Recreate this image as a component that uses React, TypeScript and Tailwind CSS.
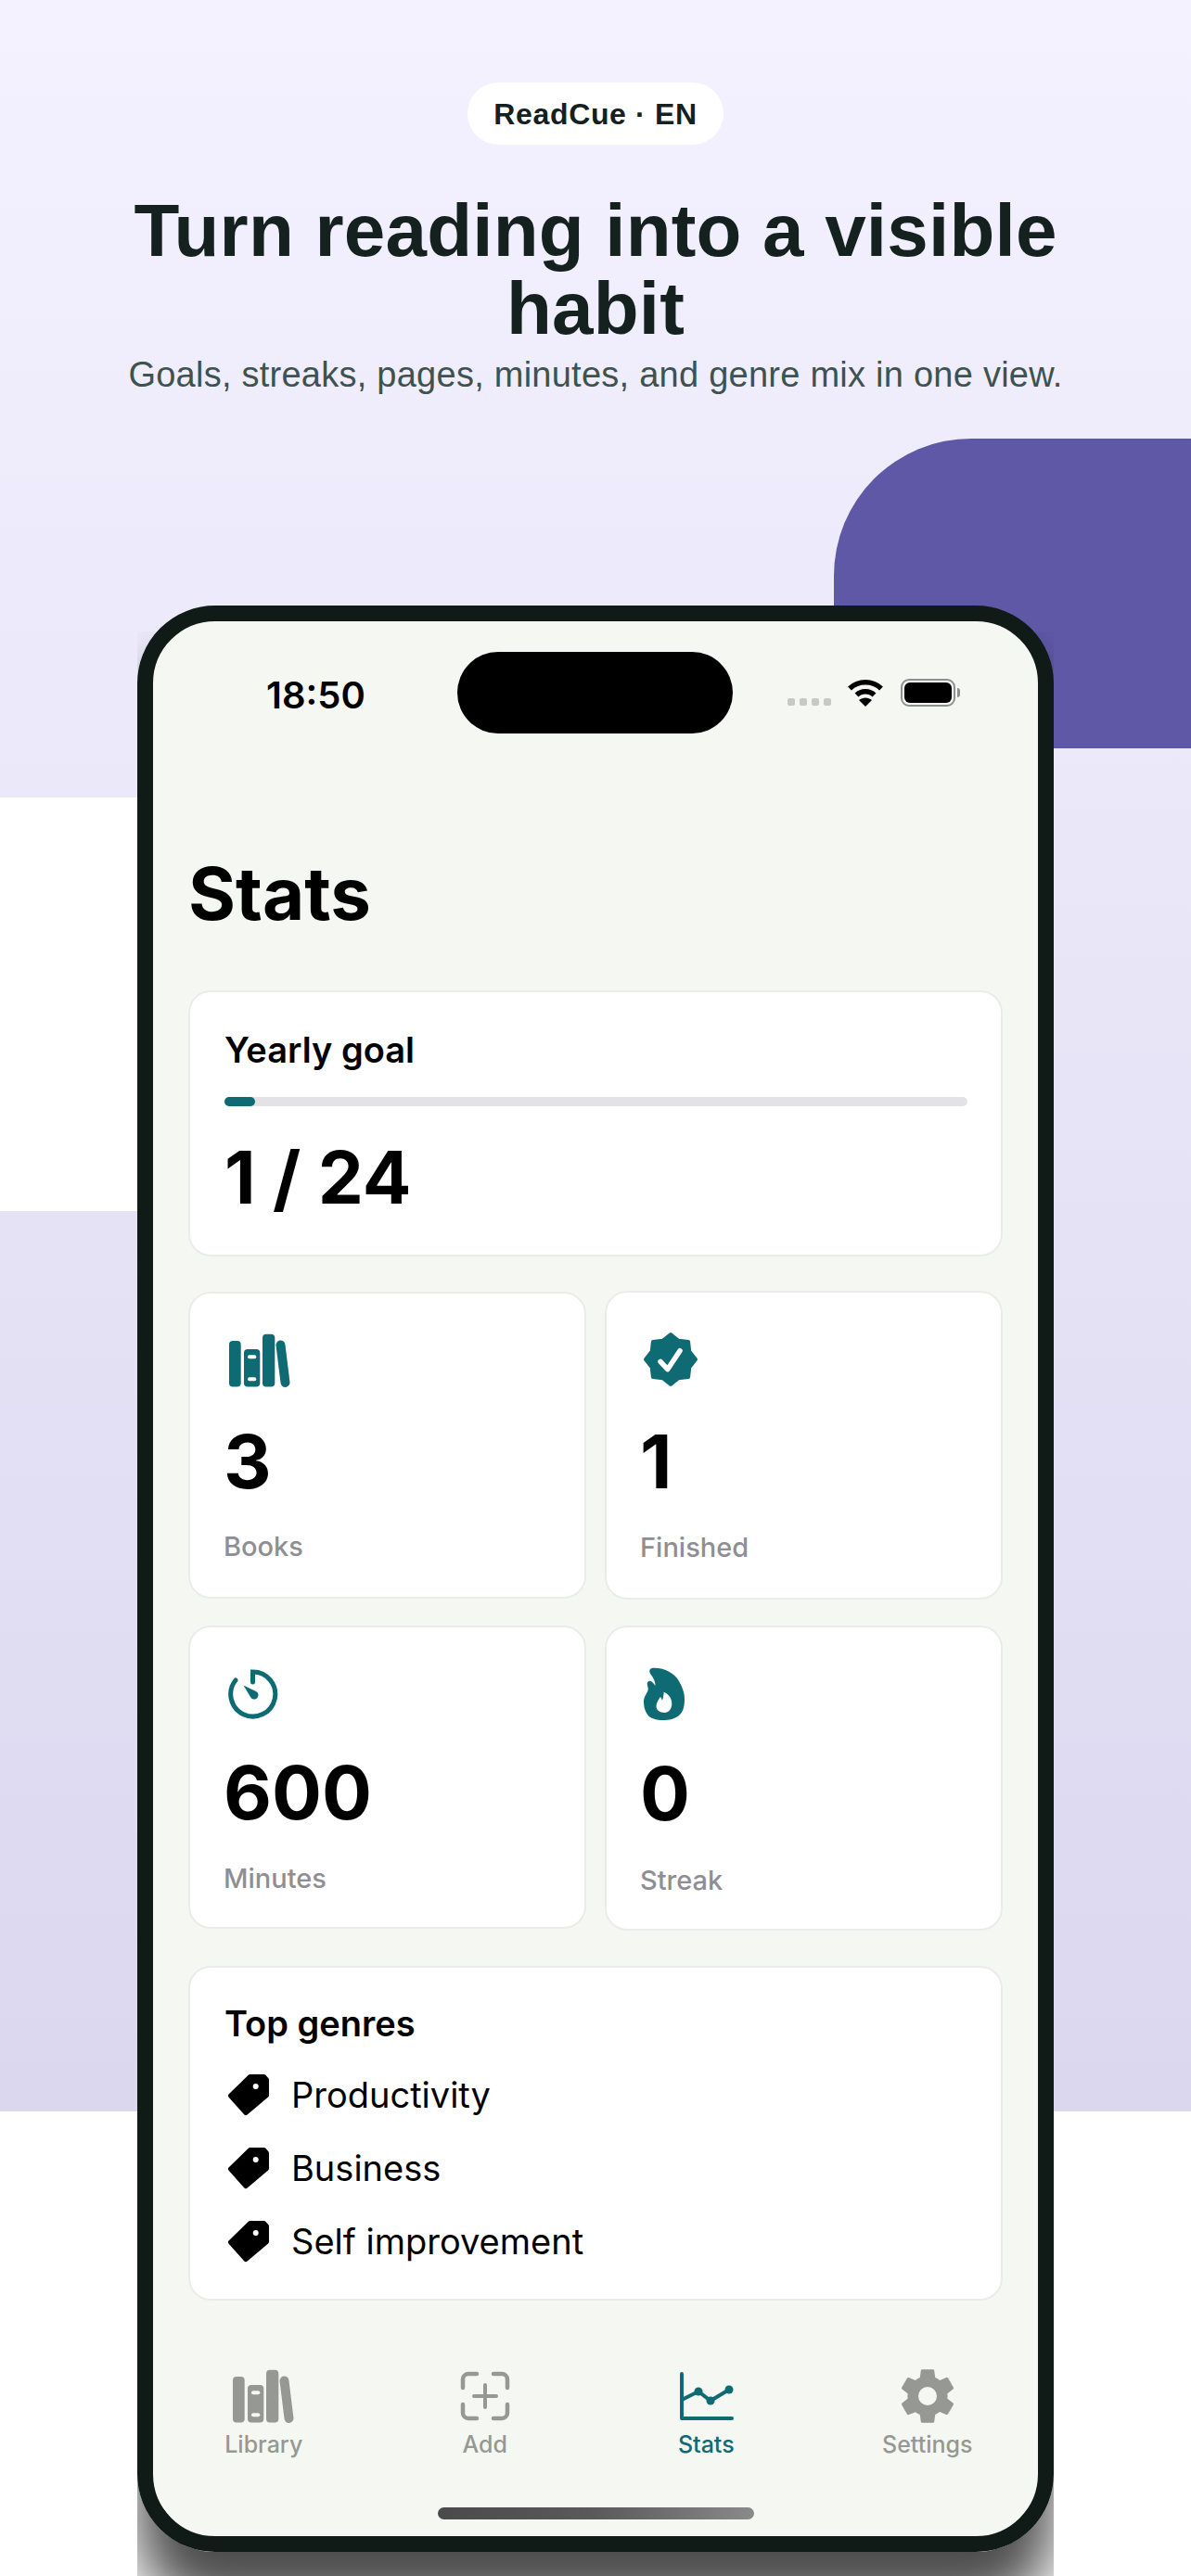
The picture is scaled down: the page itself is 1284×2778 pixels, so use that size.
import { IoSettingsSharp } from 'react-icons/io5'

const LibraryIcon = ({ slot }: { slot: string }) => (
  <svg width="66" height="58" viewBox="0 0 66 58" fill="currentColor">
    <rect x="0" y="8" width="12.7" height="49.5" rx="4" />
    <rect x="16" y="17" width="17.3" height="40.5" rx="4" />
    <rect x="20" y="23.3" width="9.3" height="4" rx="2" fill={slot} />
    <rect x="20" y="47.3" width="9.3" height="4" rx="2" fill={slot} />
    <rect x="36" y="0.7" width="13.3" height="56.8" rx="4" />
    <path d="M55.5 12.5L60.5 53" fill="none" stroke="currentColor" strokeWidth="10" strokeLinecap="round" />
  </svg>
)

const VerifiedIcon = () => (
  <svg width="60" height="60" viewBox="0 0 60 60" className="text-[#0f6b73]">
    <polygon
      points="30,3 38.4,9.7 49.1,10.9 50.3,21.6 57,30 50.3,38.4 49.1,49.1 38.4,50.3 30,57 21.6,50.3 10.9,49.1 9.7,38.4 3,30 9.7,21.6 10.9,10.9 21.6,9.7"
      fill="currentColor"
      stroke="currentColor"
      strokeWidth="4"
      strokeLinejoin="round"
    />
    <path d="M19 32.3L26.7 40.7L40 20.7" fill="none" stroke="#fff" strokeWidth="5.5" strokeLinecap="round" strokeLinejoin="round" />
  </svg>
)

const TimerIcon = () => (
  <svg width="60" height="60" viewBox="0 0 60 60" className="text-[#0f6b73]" fill="none" stroke="currentColor" strokeWidth="5" strokeLinecap="round">
    <path d="M29.5 17V6A24 24 0 1 1 11 15" />
    <path d="M19.5 20.5L33 27A4.5 4.5 0 1 1 27 33Z" fill="currentColor" stroke="none" />
  </svg>
)

const FlameIcon = () => (
  <svg width="52" height="60" viewBox="0 0 52 60" className="text-[#0f6b73]" fill="currentColor">
    <path
      fillRule="evenodd"
      d="M10.4 4C11 2 13 1.7 15.7 1.7C27 2 37 7 42 16C46 23 48 29 48 35C48 42 47 48 43 52C38 57 31 58 25 58C17 58 11 56 8 52C5 48 4 43 4 38C4 33 7 30 8.5 26C9.5 23 7 20 8 17.5C9 15.5 11 15.5 12.5 16.5C14 17.5 15.5 19.5 16.4 21C17 17 14 12 11.5 8.5C10.5 7 10 5.5 10.4 4ZM25.7 27.7C30 29 34.3 34 34.3 40C34.3 46 31 50 26.4 50C21 50 17.5 47 17.5 43C17.5 39 20 36 22 32.7L24 36.7C25 34 25.5 31 25.7 27.7Z"
    />
  </svg>
)

const TagIcon = () => (
  <svg width="46" height="46" viewBox="0 0 46 46" className="ml-[3px] text-black">
    <path
      d="M24.5 3.5H39.5L42.5 7V23.5L20 42.5L3.5 24Z"
      fill="currentColor"
      stroke="currentColor"
      strokeWidth="5"
      strokeLinejoin="round"
    />
    <circle cx="30.7" cy="14" r="3" fill="#fff" />
  </svg>
)

const AddIcon = () => (
  <svg width="54" height="54" viewBox="0 0 54 54" fill="none" stroke="currentColor" strokeWidth="4.5" strokeLinecap="round">
    <path d="M3 18V9a6 6 0 0 1 6-6h9M36 3h9a6 6 0 0 1 6 6v9M3 36v9a6 6 0 0 0 6 6h9M36 51h9a6 6 0 0 0 6-6v-9" />
    <path d="M27 15v24M15 27h24" strokeWidth="4" />
  </svg>
)

const ChartIcon = () => (
  <svg width="60" height="54" viewBox="0 0 60 54" fill="none" stroke="currentColor" strokeWidth="4" strokeLinecap="round" strokeLinejoin="round">
    <path d="M4 3V51H58" />
    <path d="M4 31L22 22L35 32L55 20" />
    <circle cx="22" cy="22" r="4.5" fill="currentColor" stroke="none" />
    <circle cx="35" cy="32" r="4.5" fill="currentColor" stroke="none" />
    <circle cx="55" cy="20" r="4.5" fill="currentColor" stroke="none" />
  </svg>
)

const WifiIcon = () => (
  <svg width="40" height="30" viewBox="0 0 40 30" className="text-black">
    <path d="M3 10.5C12.5 1.5 27.5 1.5 37 10.5" fill="none" stroke="currentColor" strokeWidth="5.5" />
    <path d="M10.5 17.5C15.5 12.5 24.5 12.5 29.5 17.5" fill="none" stroke="currentColor" strokeWidth="5.5" />
    <path d="M13 23C17 19.5 23 19.5 27 23L20 30Z" fill="currentColor" />
  </svg>
)

const StatCard = ({
  icon,
  value,
  label,
  className,
  iconClass,
  valueClass,
  labelClass,
}: {
  icon: React.ReactNode
  value: string
  label: string
  className: string
  iconClass: string
  valueClass: string
  labelClass: string
}) => (
  <div className={`bg-white rounded-[24px] border-2 border-[#ebecE9] pl-[36px] pt-[41px] ${className}`}>
    <div className={`h-[62px] flex items-center ${iconClass}`}>{icon}</div>
    <div className={`text-[80px] leading-[96px] font-bold text-black ${valueClass}`}>{value}</div>
    <div className={`text-[29px] leading-[36px] font-medium text-[#8e8e93] ${labelClass}`}>{label}</div>
  </div>
)

const genres = ['Productivity', 'Business', 'Self improvement']

const tabs = [
  { label: 'Library', icon: <LibraryIcon slot="#f5f7f2" />, active: false },
  { label: 'Add', icon: <AddIcon />, active: false },
  { label: 'Stats', icon: <ChartIcon />, active: true },
  { label: 'Settings', icon: <IoSettingsSharp size={64} />, active: false },
]

export default function App() {
  return (
    <div className="relative w-[1284px] h-[2778px] overflow-hidden bg-white font-['Liberation_Sans',sans-serif]">
      {/* backdrop shapes */}
      <div className="absolute inset-x-0 top-0 h-[2277px] bg-gradient-to-b from-[#f4f2ff] to-[#dbd7ef]" />
      <div className="absolute left-0 top-[860px] w-[148px] h-[446px] bg-white" />
      <div className="absolute left-[899px] top-[473px] w-[385px] h-[334px] bg-[#5e58a6] rounded-tl-[148px]" />
      <div className="absolute left-[148px] top-[681px] w-[988px] h-[2097px] overflow-hidden">
        <div className="absolute left-0 top-[-28px] w-[988px] h-[2099px] rounded-[84px] shadow-[0_60px_60px_rgba(0,0,0,0.7)]" />
      </div>

      <div className="relative flex flex-col items-center pt-[89px]">
        <div className="h-[67px] w-[276px] rounded-full bg-white flex items-center justify-center text-[32px] font-bold tracking-[0.64px] text-[#14211f]">
          ReadCue · EN
        </div>
        <h1 className="mt-[51px] w-[1040px] text-center text-[80px] leading-[84px] font-bold tracking-[0.2px] text-[#14211f]">
          Turn reading into a visible habit
        </h1>
        <p className="mt-[5px] text-[38px] leading-[48px] tracking-[0.25px] text-[#3e5250]">
          Goals, streaks, pages, minutes, and genre mix in one view.
        </p>

        {/* phone */}
        <div className="mt-[225px] w-[988px] h-[2099px] rounded-[84px] border-[17px] border-[#101a17] bg-[#f5f7f2] font-['Inter',sans-serif] flex flex-col">
          <div className="flex items-center h-[88px] mt-[33px]">
            <div className="w-[328px] pl-[122px] text-[40px] font-semibold text-black pt-[6px]">18:50</div>
            <div className="w-[297px] h-[88px] rounded-[44px] bg-black" />
            <div className="flex items-center ml-[59px]">
              <div className="flex gap-[5px] mt-[20px]">
                <span className="w-[8px] h-[8px] rounded-[2px] bg-[#c8c9c5]" />
                <span className="w-[8px] h-[8px] rounded-[2px] bg-[#c8c9c5]" />
                <span className="w-[8px] h-[8px] rounded-[2px] bg-[#c8c9c5]" />
                <span className="w-[8px] h-[8px] rounded-[2px] bg-[#c8c9c5]" />
              </div>
              <div className="ml-[17px]">
                <WifiIcon />
              </div>
              <div className="ml-[18px] flex items-center">
                <div className="w-[59px] h-[30px] rounded-[9px] border-2 border-[#8f8f8f] p-[2px]">
                  <div className="w-full h-full rounded-[6px] bg-black" />
                </div>
                <div className="ml-[2px] w-[3px] h-[10px] rounded-r-[3px] bg-[#8f8f8f]" />
              </div>
            </div>
          </div>

          <h2 className="mt-[123px] pl-[38px] text-[78px] leading-[100px] font-bold text-black">Stats</h2>

          <div className="mt-[54px] px-[38px]">
            <div className="h-[287px] bg-white rounded-[24px] border-2 border-[#ebecE9] pl-[37px] pr-[36px] pt-[38px]">
              <div className="text-[38px] leading-[48px] font-semibold text-black">Yearly goal</div>
              <div className="mt-[27px] h-[10px] rounded-full bg-[#e3e3e5]">
                <div className="h-full w-[33px] rounded-full bg-[#0f6b73]" />
              </div>
              <div className="mt-[30px] text-[78px] leading-[94px] font-bold text-black">1 / 24</div>
            </div>

            <div className="mt-[38px] grid grid-cols-2 gap-x-[20px]">
              <div className="flex flex-col gap-[29px]">
                <StatCard
                  icon={<LibraryIcon slot="#ffffff" />}
                  value="3"
                  label="Books"
                  className="h-[331px] text-[#0f6b73]"
                  iconClass="ml-[6px]"
                  valueClass="mt-[30px]"
                  labelClass="mt-[26px]"
                />
                <StatCard
                  icon={<TimerIcon />}
                  value="600"
                  label="Minutes"
                  className="h-[327px]"
                  iconClass="ml-[2px]"
                  valueClass="mt-[27px]"
                  labelClass="mt-[27px]"
                />
              </div>
              <div className="flex flex-col gap-[28px] -mt-px">
                <StatCard
                  icon={<VerifiedIcon />}
                  value="1"
                  label="Finished"
                  className="h-[333px]"
                  iconClass="ml-[3px]"
                  valueClass="mt-[31px]"
                  labelClass="mt-[27px]"
                />
                <StatCard
                  icon={<FlameIcon />}
                  value="0"
                  label="Streak"
                  className="h-[329px]"
                  iconClass="ml-0"
                  valueClass="mt-[28px]"
                  labelClass="mt-[28px]"
                />
              </div>
            </div>

            <div className="mt-[38px] h-[361px] bg-white rounded-[24px] border-2 border-[#ebecE9] pl-[37px] pt-[36px]">
              <div className="text-[38px] leading-[48px] font-semibold text-black">Top genres</div>
              <div className="mt-[28px] flex flex-col gap-[29px]">
                {genres.map((genre) => (
                  <div key={genre} className="flex items-center h-[50px] text-[38px] text-black">
                    <TagIcon />
                    <span className="ml-[23px]">{genre}</span>
                  </div>
                ))}
              </div>
            </div>
          </div>

          <div className="mt-[71px] grid grid-cols-4">
            {tabs.map((tab) => (
              <div
                key={tab.label}
                className={`flex flex-col items-center ${tab.active ? 'text-[#0f6b73]' : 'text-[#969893]'}`}
              >
                <div className="h-[64px] flex items-center justify-center">{tab.icon}</div>
                <div className="mt-[4px] text-[25px] leading-[32px] font-medium">{tab.label}</div>
              </div>
            ))}
          </div>

          <div className="mt-[52px] mx-auto w-[341px] h-[13px] rounded-full bg-gradient-to-r from-[#4a4a4a] via-[#5a5a5a] to-[#8a8a8a]" />
        </div>
      </div>
    </div>
  )
}
